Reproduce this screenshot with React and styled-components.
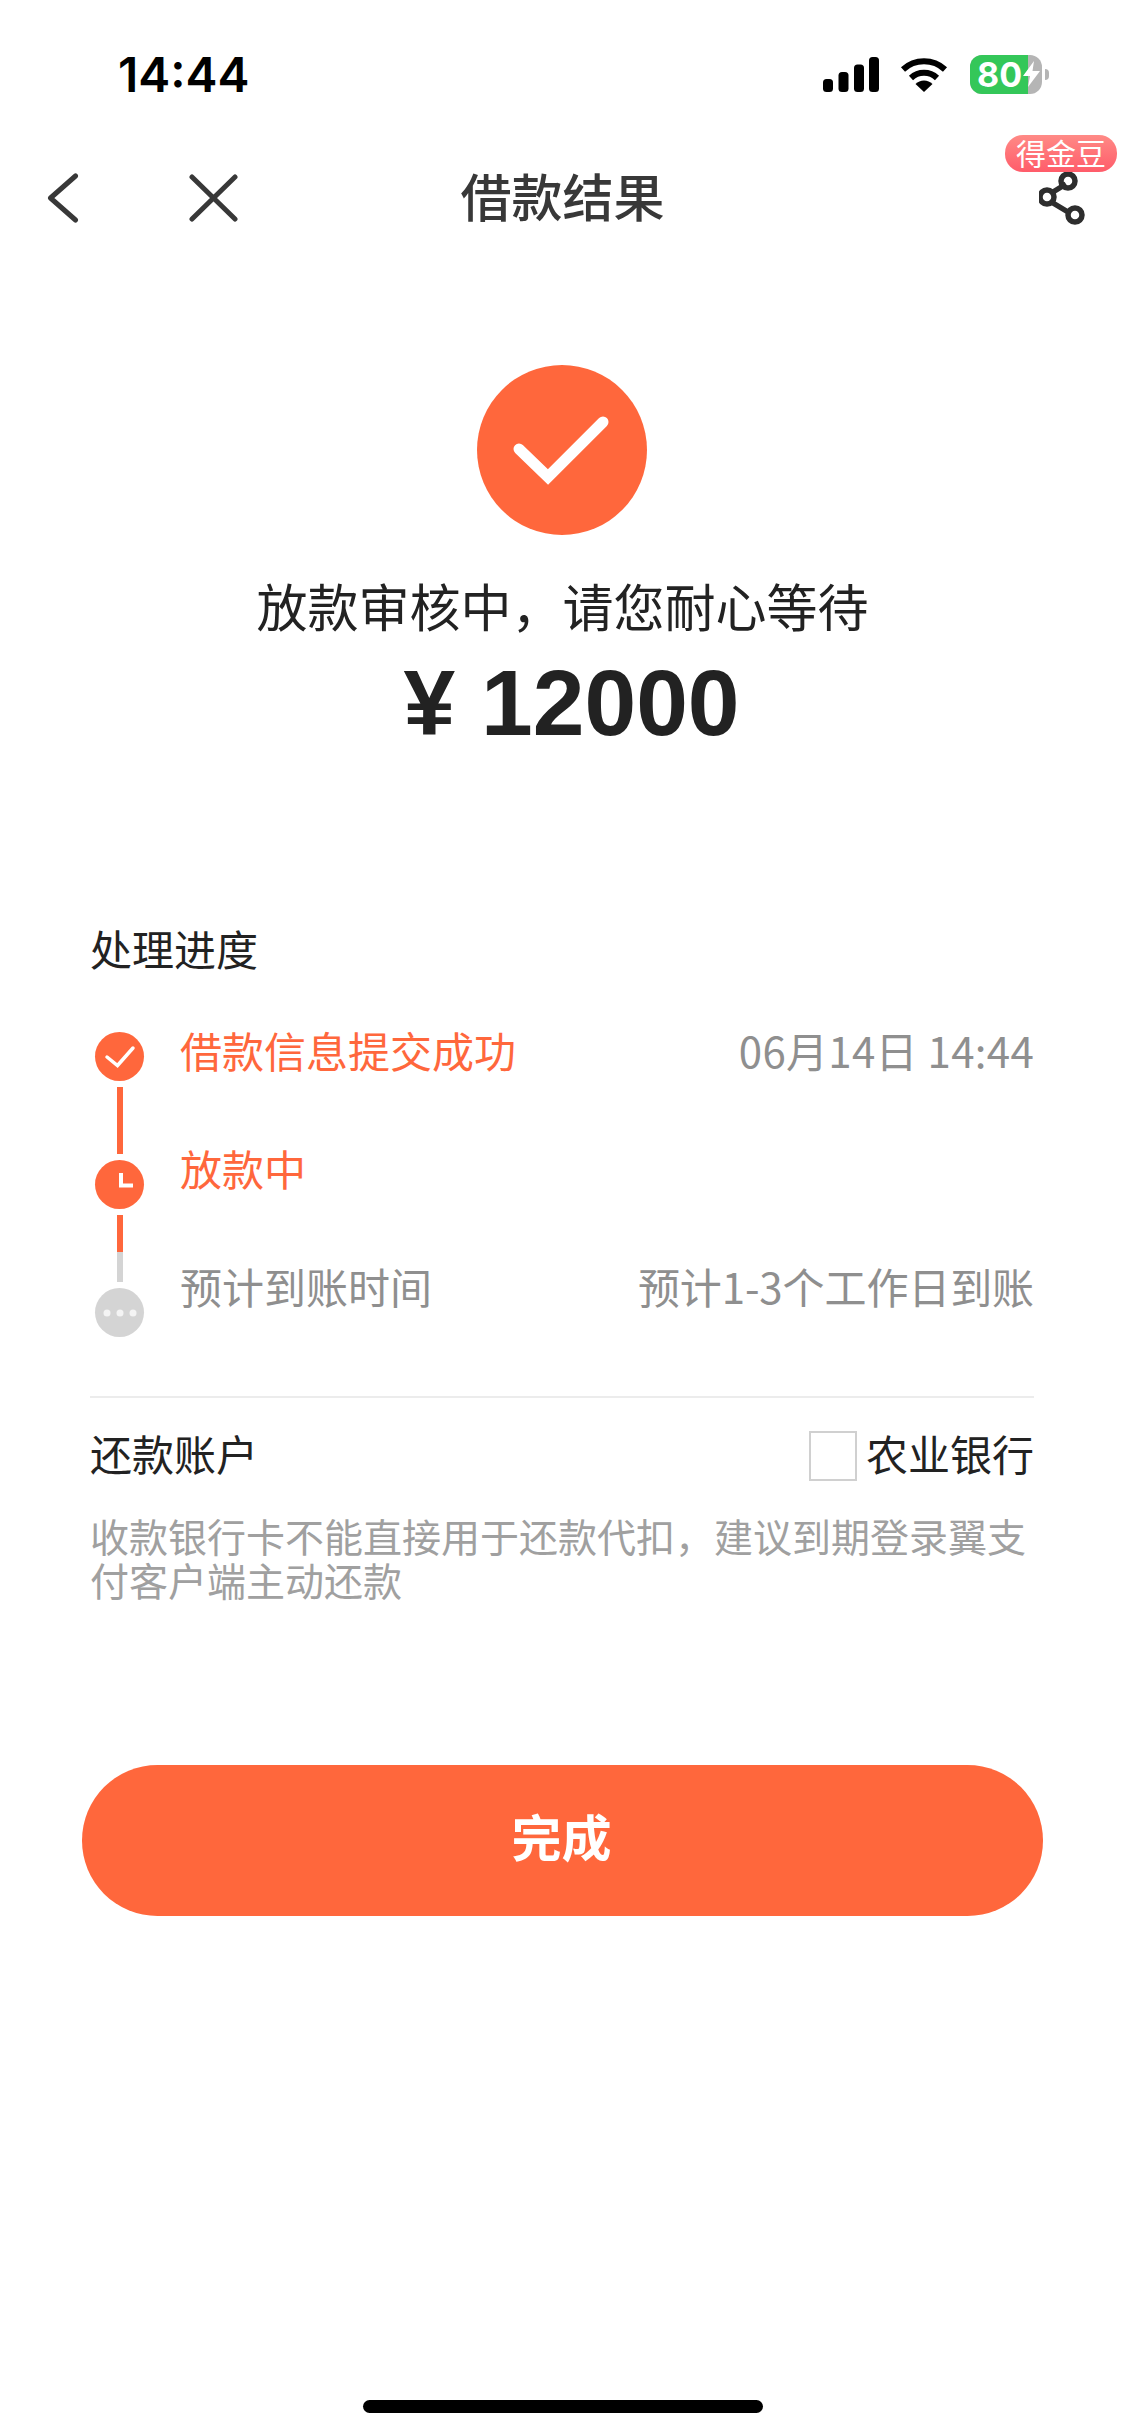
import styled, { createGlobalStyle } from 'styled-components';

const Color = {
  orange: '#ff673c',
  dark: '#222222',
  nav: '#383838',
  grey: '#8f8f8f',
  lightGrey: '#d4d4d4',
  note: '#a0a0a0',
};

const GlobalStyle = createGlobalStyle`
  html, body {
    margin: 0;
    padding: 0;
    background: #fff;
  }
  body {
    font-family: "Noto Sans CJK SC", "Liberation Sans", sans-serif;
  }
`;

const Page = styled.div`
  position: relative;
  width: 1125px;
  height: 2435px;
  display: flex;
  flex-direction: column;
  background: #fff;
  overflow: hidden;
`;

/* status bar */
const StatusBar = styled.div`
  height: 130px;
  flex-shrink: 0;
  box-sizing: border-box;
  padding: 18px 76px 0 118px;
  display: flex;
  align-items: center;
  justify-content: space-between;
`;

const Time = styled.span`
  font-family: Inter, "Liberation Sans", sans-serif;
  font-size: 48px;
  font-weight: 600;
  color: #000;
`;

const StatusIcons = styled.div`
  display: flex;
  align-items: center;
`;

const Signal = styled.svg`
  width: 56px;
  height: 35px;
  margin-right: 21px;
`;

const Wifi = styled.svg`
  width: 48px;
  height: 35px;
  margin-right: 22px;
`;

const Battery = styled.div`
  position: relative;
  width: 72px;
  height: 39px;
  border-radius: 12px;
  background: #b5b5b5;
  overflow: hidden;
  display: flex;
  align-items: center;
`;

const BatteryFill = styled.div`
  position: absolute;
  left: 0;
  top: 0;
  bottom: 0;
  width: ${(props) => props.$level}%;
  background: #34c759;
`;

const BatteryText = styled.span`
  position: relative;
  margin-left: 7px;
  font-family: Inter, "Liberation Sans", sans-serif;
  font-size: 34px;
  line-height: 39px;
  font-weight: 700;
  color: #fff;
`;

const BatteryBolt = styled.svg`
  position: relative;
  width: 17px;
  height: 26px;
  margin-left: 1px;
`;

const BatteryNub = styled.div`
  width: 4px;
  height: 11px;
  margin-left: 3px;
  border-radius: 0 4px 4px 0;
  background: #b5b5b5;
`;

/* nav */
const NavBar = styled.div`
  height: 136px;
  flex-shrink: 0;
  display: grid;
  grid-template-columns: 1fr auto 1fr;
  align-items: center;
`;

const NavLeft = styled.div`
  display: flex;
  align-items: center;
  padding-left: 47px;
  gap: 110px;
`;

const NavRight = styled.div`
  display: flex;
  justify-content: flex-end;
  padding-right: 36px;
`;

const NavTitle = styled.div`
  font-size: 51px;
  line-height: 70px;
  padding-bottom: 6px;
  font-weight: 500;
  color: ${Color.nav};
`;

const ShareButton = styled.div`
  position: relative;
  width: 50px;
  height: 56px;
`;

const Badge = styled.span`
  position: absolute;
  right: -28px;
  top: -35px;
  width: 112px;
  height: 37px;
  border-radius: 18px;
  background: linear-gradient(180deg, #ff8a86, #ff5c6a);
  color: #fff;
  font-size: 30px;
  line-height: 34px;
  text-align: center;
  white-space: nowrap;
`;

/* hero */
const Hero = styled.div`
  padding-top: 99px;
  display: flex;
  flex-direction: column;
  align-items: center;
`;

const HeroIcon = styled.div`
  width: 170px;
  height: 170px;
  margin-right: 2px;
  border-radius: 50%;
  background: ${Color.orange};
  display: flex;
  align-items: center;
  justify-content: center;
`;

const HeroText = styled.div`
  margin-top: 35px;
  font-size: 51px;
  line-height: 70px;
  color: ${Color.dark};
  white-space: nowrap;
`;

const Amount = styled.div`
  margin-top: 13px;
  padding-left: 18px;
  font-family: "Liberation Sans", sans-serif;
  font-size: 93px;
  line-height: 100px;
  font-weight: 700;
  color: ${Color.dark};
  white-space: pre;
`;

/* progress */
const Section = styled.div`
  padding: 0 91px 0 90px;
`;

const SectionTitle = styled.div`
  margin-top: 170px;
  font-size: 42px;
  line-height: 50px;
  color: ${Color.dark};
`;

const Timeline = styled.div`
  margin-top: 56px;
  display: flex;
  gap: 36px;
`;

const Rail = styled.div`
  margin-left: 5px;
  padding-top: 3px;
  width: 49px;
  flex-shrink: 0;
  display: flex;
  flex-direction: column;
  align-items: center;
  gap: 6px;
`;

const StepDot = styled.div`
  width: 49px;
  height: 49px;
  border-radius: 50%;
  background: ${(props) => (props.$done ? Color.orange : Color.lightGrey)};
  svg {
    display: block;
  }
`;

const Connector = styled.div`
  width: 6px;
  height: 67px;
  background: ${(props) =>
    props.$split
      ? `linear-gradient(180deg, ${Color.orange} 55%, ${Color.lightGrey} 55%)`
      : Color.orange};
`;

const Steps = styled.div`
  flex: 1;
  margin-top: -4px;
  display: flex;
  flex-direction: column;
  gap: 68px;
`;

const StepRow = styled.div`
  height: 50px;
  display: flex;
  align-items: center;
  justify-content: space-between;
  font-size: 42px;
  line-height: 50px;
  color: ${(props) => (props.$done ? Color.orange : Color.grey)};
`;

const StepMeta = styled.span`
  color: ${Color.grey};
  font-size: 42px;
  letter-spacing: ${(props) => (props.$tight ? '-0.1px' : '0.3px')};
`;

const Divider = styled.div`
  margin-top: 59px;
  height: 2px;
  background: #ececec;
`;

const AccountRow = styled.div`
  margin-top: 33px;
  height: 50px;
  display: flex;
  align-items: center;
  justify-content: space-between;
  font-size: 42px;
  line-height: 50px;
  color: ${Color.dark};
`;

const AccountText = styled.span`
  margin-top: -6px;
`;

const Bank = styled.div`
  display: flex;
  align-items: center;
  gap: 9px;
`;

const BankLogo = styled.div`
  box-sizing: border-box;
  width: 48px;
  height: 50px;
  border: 2px solid #d0d0d0;
`;

const Note = styled.div`
  margin-top: 32px;
  font-size: 39px;
  line-height: 44px;
  color: ${Color.note};
`;

const DoneWrapper = styled.div`
  margin-top: 164px;
  padding: 0 82px;
`;

const DoneButton = styled.button`
  display: block;
  width: 100%;
  height: 151px;
  padding: 0 2px 12px 0;
  border: none;
  border-radius: 76px;
  background: ${Color.orange};
  color: #fff;
  font-family: inherit;
  font-size: 50px;
  font-weight: 700;
`;

const HomeIndicator = styled.div`
  margin: auto auto 22px;
  width: 400px;
  height: 13px;
  border-radius: 7px;
  background: #000;
`;

const App = () => {
  return (
    <Page>
      <GlobalStyle />
      <StatusBar>
        <Time>14:44</Time>
        <StatusIcons>
          <Signal viewBox="0 0 56 35">
            <rect x="0" y="22" width="10" height="13" rx="3.5" fill="#000" />
            <rect x="15.5" y="15" width="10" height="20" rx="3.5" fill="#000" />
            <rect x="31" y="7.5" width="10" height="27.5" rx="3.5" fill="#000" />
            <rect x="46" y="0" width="10" height="35" rx="3.5" fill="#000" />
          </Signal>
          <Wifi viewBox="0 0 48 35">
            <path d="M3 12.5 A31 31 0 0 1 45 12.5" fill="none" stroke="#000" strokeWidth="6" />
            <path d="M11 21 A19 19 0 0 1 37 21" fill="none" stroke="#000" strokeWidth="6" />
            <path d="M15.5 27 A12 12 0 0 1 32.5 27 L24 35 Z" fill="#000" />
          </Wifi>
          <Battery>
            <BatteryFill $level={80} />
            <BatteryText>80</BatteryText>
            <BatteryBolt viewBox="0 0 17 26">
              <path d="M11 0 L0 15 H7 L5 26 L17 10 H9.5 Z" fill="#fff" />
            </BatteryBolt>
          </Battery>
          <BatteryNub />
        </StatusIcons>
      </StatusBar>

      <NavBar>
        <NavLeft>
          <svg width="32" height="50" viewBox="0 0 32 50">
            <path d="M28.5 3 L3.5 25 L28.5 47" fill="none" stroke={Color.nav} strokeWidth="5" strokeLinecap="round" strokeLinejoin="round" />
          </svg>
          <svg width="49" height="50" viewBox="0 0 49 50">
            <path d="M3 4 L46 46 M46 4 L3 46" fill="none" stroke={Color.nav} strokeWidth="5" strokeLinecap="round" />
          </svg>
        </NavLeft>
        <NavTitle>借款结果</NavTitle>
        <NavRight>
          <ShareButton>
            <Badge>得金豆</Badge>
            <svg width="50" height="56" viewBox="0 0 50 56">
              <path d="M14 22 L27 14 M14 33 L29 42" stroke="#2e2e2e" strokeWidth="5.5" />
              <circle cx="29" cy="11" r="7" fill="none" stroke="#2e2e2e" strokeWidth="5.5" />
              <circle cx="8" cy="27" r="7" fill="#fff" stroke="#2e2e2e" strokeWidth="5.5" />
              <circle cx="36" cy="45" r="7" fill="none" stroke="#2e2e2e" strokeWidth="5.5" />
            </svg>
          </ShareButton>
        </NavRight>
      </NavBar>

      <Hero>
        <HeroIcon>
          <svg width="170" height="170" viewBox="0 0 170 170">
            <path d="M42 84 L71 112 L126 57" fill="none" stroke="#fff" strokeWidth="11" strokeLinecap="round" />
          </svg>
        </HeroIcon>
        <HeroText>放款审核中，请您耐心等待</HeroText>
        <Amount>¥ 12000</Amount>
      </Hero>

      <Section>
        <SectionTitle>处理进度</SectionTitle>
        <Timeline>
          <Rail>
            <StepDot $done>
              <svg width="49" height="49" viewBox="0 0 49 49">
                <path d="M12 25 L22.5 33.5 L38 16" fill="none" stroke="#fff" strokeWidth="3.5" strokeLinecap="round" />
              </svg>
            </StepDot>
            <Connector />
            <StepDot $done>
              <svg width="49" height="49" viewBox="0 0 49 49">
                <path d="M26 13 V25.5 H38" fill="none" stroke="#fff" strokeWidth="4" />
              </svg>
            </StepDot>
            <Connector $split />
            <StepDot>
              <svg width="49" height="49" viewBox="0 0 49 49">
                <circle cx="12" cy="25" r="3.5" fill="#f4f4f4" />
                <circle cx="25" cy="25" r="3.5" fill="#f4f4f4" />
                <circle cx="38" cy="25" r="3.5" fill="#f4f4f4" />
              </svg>
            </StepDot>
          </Rail>
          <Steps>
            <StepRow $done>
              <span>借款信息提交成功</span>
              <StepMeta>06月14日 14:44</StepMeta>
            </StepRow>
            <StepRow $done>
              <span>放款中</span>
            </StepRow>
            <StepRow>
              <span>预计到账时间</span>
              <StepMeta $tight>预计1-3个工作日到账</StepMeta>
            </StepRow>
          </Steps>
        </Timeline>
        <Divider />
        <AccountRow>
          <AccountText>还款账户</AccountText>
          <Bank>
            <BankLogo />
            <AccountText>农业银行</AccountText>
          </Bank>
        </AccountRow>
        <Note>收款银行卡不能直接用于还款代扣，建议到期登录翼支付客户端主动还款</Note>
      </Section>

      <DoneWrapper>
        <DoneButton>完成</DoneButton>
      </DoneWrapper>

      <HomeIndicator />
    </Page>
  );
};

export default App;
